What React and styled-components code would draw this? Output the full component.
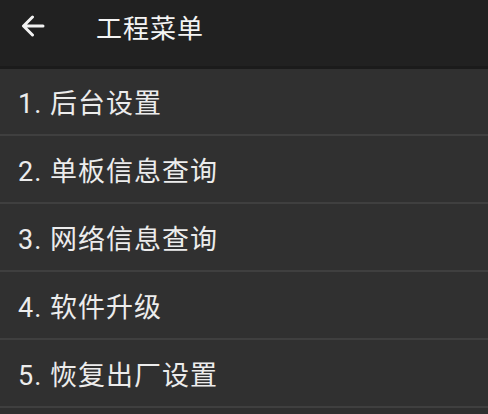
import React from 'react';
import styled, { createGlobalStyle } from 'styled-components';

const GlobalStyle = createGlobalStyle`
  html, body {
    margin: 0;
    padding: 0;
    background: #2f2f2f;
  }
  body {
    font-family: Roboto, "Noto Sans CJK SC", "Noto Sans", sans-serif;
  }
`;

const items = ['后台设置', '单板信息查询', '网络信息查询', '软件升级', '恢复出厂设置'];

export default function App() {
  return (
    <Page>
      <GlobalStyle />
      <Toolbar>
        <BackButton aria-label="back">
          <svg width="24" height="22" viewBox="0 0 24 22" fill="none">
            <path d="M22 11H3M11.5 2L2.5 11l9 9" stroke="#f2f2f2" strokeWidth="3" strokeLinecap="round" strokeLinejoin="round" />
          </svg>
        </BackButton>
        <Title>工程菜单</Title>
      </Toolbar>
      <Menu>
        {items.map((label, i) => (
          <Row key={label}>
            {i + 1}. {label}
          </Row>
        ))}
      </Menu>
    </Page>
  );
}

const Page = styled.div`
  width: 488px;
  height: 414px;
  overflow: hidden;
  background: #2f2f2f;
`;

const Toolbar = styled.div`
  height: 69px;
  box-sizing: border-box;
  padding: 0 0 14px 21px;
  display: flex;
  align-items: center;
  background: #212121;
  border-bottom: 3px solid #1b1b1b;
`;

const BackButton = styled.div`
  width: 24px;
  height: 22px;
  display: flex;
  margin-right: 51px;
`;

const Title = styled.div`
  color: #f4f4f4;
  font-size: 26px;
  letter-spacing: 1px;
`;

const Menu = styled.div`
  display: flex;
  flex-direction: column;
`;

const Row = styled.div`
  height: 68px;
  box-sizing: border-box;
  padding-left: 18px;
  display: flex;
  align-items: center;
  color: #ececec;
  font-size: 27px;
  letter-spacing: 1px;
  background: #303030;
  border-bottom: 2px solid #3f3f3f;
  &:first-child {
    height: 67px;
  }
`;
